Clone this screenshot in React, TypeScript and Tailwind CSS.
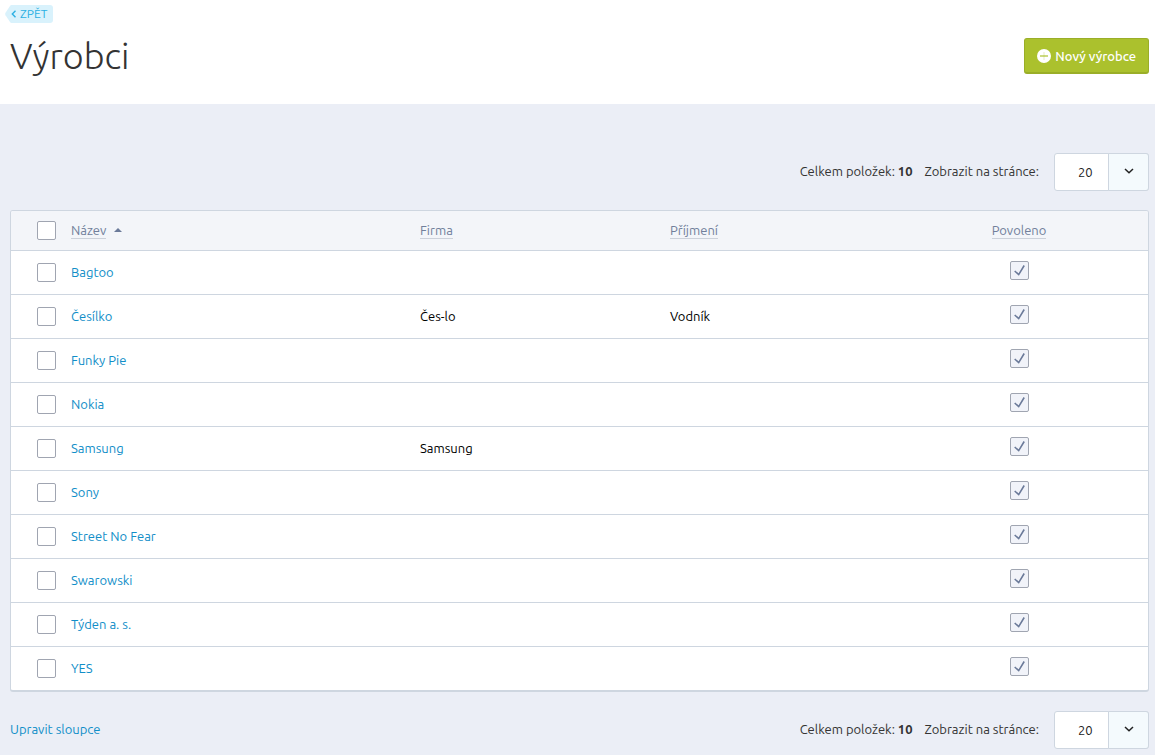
import { useState } from "react";

type Manufacturer = {
    name: string;
    company?: string;
    surname?: string;
}

const manufacturers: Manufacturer[] = [
    { name: "Bagtoo" },
    { name: "Česílko", company: "Čes-lo", surname: "Vodník" },
    { name: "Funky Pie" },
    { name: "Nokia" },
    { name: "Samsung", company: "Samsung" },
    { name: "Sony" },
    { name: "Street No Fear" },
    { name: "Swarowski" },
    { name: "Týden a. s." },
    { name: "YES" },
];

const checkboxClass = "block size-[19px] appearance-none rounded-xs border border-[#a0a5b1] bg-white checked:bg-[#f1f3f9]";

type PagerProps = {
    id: string;
    size: string;
    onChange: (size: string) => void;
}

const Pager = ({ id, size, onChange }: PagerProps) => {
    return (
        <div className="ml-auto flex items-center text-[#333]">
            <p className="mr-3 pb-0.5">
                Celkem položek: <strong>{manufacturers.length}</strong>
            </p>
            <label htmlFor={id} className="mr-[15px] pb-0.5">Zobrazit na stránce:</label>
            <div className="relative">
                <select
                    id={id}
                    value={size}
                    onChange={(e) => onChange(e.target.value)}
                    className="block h-[38px] w-[95px] appearance-none rounded-[3px] border border-[#ced6e0] bg-white pl-[23px] text-[#222]"
                >
                    <option>20</option>
                    <option>50</option>
                    <option>100</option>
                </select>
                <span className="pointer-events-none absolute inset-y-0 right-0 flex w-[41px] items-center justify-center rounded-r-[3px] border border-[#ced6e0] bg-[#f4fafd]">
                    <svg width="10" height="6" viewBox="0 0 10 6" fill="none" stroke="#222" strokeWidth="1.5" className="mb-0.5">
                        <path d="M1 1l4 3.8L9 1" />
                    </svg>
                </span>
            </div>
        </div>
    )
}

type HeadingProps = {
    label: string;
}

const SortLink = ({ label }: HeadingProps) => {
    return (
        <a href="#" className="inline-block border-b border-[#ccd1da] leading-4 text-[#717f9b]">{label}</a>
    )
}

const App = () => {
    const [size, setSize] = useState("20");
    const [selected, setSelected] = useState<string[]>([]);

    const toggle = (name: string) => {
        setSelected(selected.includes(name) ? selected.filter((n) => n !== name) : [...selected, name]);
    }

    const toggleAll = () => {
        setSelected(selected.length === manufacturers.length ? [] : manufacturers.map((m) => m.name));
    }

    return (
        <div className="flex min-h-screen flex-col bg-[#ebeef6] font-['Ubuntu','Noto_Sans',sans-serif] text-[13px] leading-5">
            <header className="bg-white pt-[5px] pr-1.5 pb-7 pl-[5px]">
                <a href="#" className="flex h-[18px] w-fit items-center text-xs text-[#2bb0e3]">
                    <svg width="15" height="18" viewBox="0 0 15 18" fill="none">
                        <path d="M15 0H6.500Q5.600 0 5 .9L.5 7.800Q-.1 9 .5 10.200L5 17.100Q5.600 18 6.500 18H15z" fill="#d9f2fc" />
                        <path d="M10.500 5.800L7.300 9l3.200 3.200" stroke="#2bb0e3" strokeWidth="1.400" />
                    </svg>
                    <span className="flex h-full items-center rounded-r-[3px] bg-[#d9f2fc] pr-1.5">ZPĚT</span>
                </a>
                <div className="flex items-center justify-between pt-[13px] pl-[5px]">
                    <h1 className="text-[36px] leading-10 font-light text-[#333]">Výrobci</h1>
                    <button type="button" className="flex h-9 items-center gap-1 rounded-[3px] border border-b-2 border-[#9aae28] bg-[#abc12d] px-3 font-medium text-white">
                        <svg width="14" height="14" viewBox="0 0 14 14">
                            <circle cx="7" cy="7" r="7" fill="#fff" />
                            <path d="M3 7h8" stroke="#abc12d" strokeWidth="1.2" />
                            <path d="M7 3v8" stroke="#abc12d" strokeWidth="1" strokeOpacity=".3" />
                        </svg>
                        Nový výrobce
                    </button>
                </div>
            </header>

            <main className="flex-1 pr-1.5 pl-2.5">
                <div className="flex pt-[49px] pb-[19px]">
                    <Pager id="size-top" size={size} onChange={setSize} />
                </div>

                <div className="overflow-hidden rounded-[3px] border border-b-2 border-[#ced6e0] bg-white">
                    <table className="w-full table-fixed border-collapse text-left">
                        <colgroup>
                            <col className="w-[60px]" />
                            <col />
                            <col className="w-[250px]" />
                            <col className="w-[220px]" />
                            <col className="w-[258px]" />
                        </colgroup>
                        <thead className="bg-[#f3f5f9]">
                            <tr className="h-[39px] border-b border-[#ced6e0]">
                                <th className="pl-[26px]">
                                    <input
                                        type="checkbox"
                                        aria-label="Vybrat vše"
                                        checked={selected.length === manufacturers.length}
                                        onChange={toggleAll}
                                        className={checkboxClass}
                                    />
                                </th>
                                <th className="font-normal">
                                    <div className="flex items-center gap-2">
                                        <SortLink label="Název" />
                                        <svg width="8" height="4" viewBox="0 0 8 4" fill="#6b7a99">
                                            <path d="M4 0l4 4H0z" />
                                        </svg>
                                    </div>
                                </th>
                                <th className="font-normal"><SortLink label="Firma" /></th>
                                <th className="font-normal"><SortLink label="Příjmení" /></th>
                                <th className="text-center font-normal"><SortLink label="Povoleno" /></th>
                            </tr>
                        </thead>
                        <tbody>
                            {manufacturers.map((m) => (
                                <tr key={m.name} className="h-11 border-b border-[#ced6e0] last:border-b-0">
                                    <td className="pl-[26px]">
                                        <input
                                            type="checkbox"
                                            aria-label={m.name}
                                            checked={selected.includes(m.name)}
                                            onChange={() => toggle(m.name)}
                                            className={checkboxClass}
                                        />
                                    </td>
                                    <td><a href="#" className="text-[#118ec8]">{m.name}</a></td>
                                    <td>{m.company}</td>
                                    <td>{m.surname}</td>
                                    <td className="pb-1">
                                        <div className="relative mx-auto size-[19px]">
                                            <input type="checkbox" aria-label="Povoleno" checked readOnly className={checkboxClass} />
                                            <svg width="19" height="19" viewBox="0 0 19 19" fill="none" stroke="#6b7a99" strokeWidth="1.6" className="pointer-events-none absolute inset-0">
                                                <path d="M4.700 10l4 3.600L14.200 4.500" />
                                            </svg>
                                        </div>
                                    </td>
                                </tr>
                            ))}
                        </tbody>
                    </table>
                </div>

                <div className="flex items-center pt-[19px] pb-1.5">
                    <a href="#" className="pb-0.5 text-[#118ec8]">Upravit sloupce</a>
                    <Pager id="size-bottom" size={size} onChange={setSize} />
                </div>
            </main>
        </div>
    )
}

export default App;
